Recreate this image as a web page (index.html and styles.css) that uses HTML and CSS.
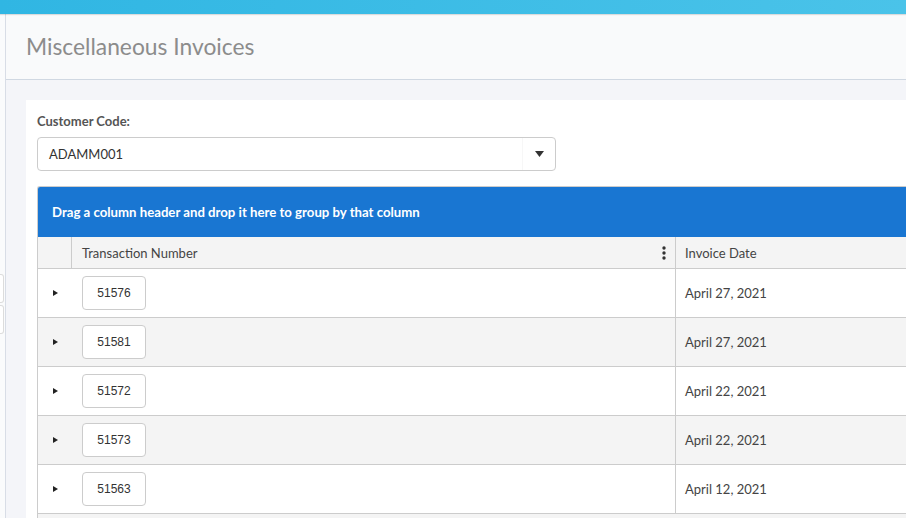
FILE: index.html
```html
<!doctype html>
<html lang="en">
  <head>
    <meta charset="UTF-8" />
    <meta name="viewport" content="width=device-width, initial-scale=1.0" />
    <title>Miscellaneous Invoices</title>
    <link rel="stylesheet" href="styles.css">
  </head>
  <body>
    <div class="topbar"></div>
    <div class="layout">
      <div class="sidebar">
        <div class="side-tab"></div>
        <div class="side-tab"></div>
      </div>
      <div class="main">
        <div class="page-header">
          <h1>Miscellaneous Invoices</h1>
        </div>
        <div class="content">
          <div class="card">
            <label class="field-label">Customer Code:</label>
            <div class="select">
              <span class="select-value">ADAMM001</span>
              <span class="select-arrow">
                <svg width="9" height="6" viewBox="0 0 9 6"><path d="M0 0h9L4.5 6z" fill="#333"/></svg>
              </span>
            </div>

            <div class="grid">
              <div class="group-panel">Drag a column header and drop it here to group by that column</div>
              <div class="grid-row grid-head">
                <div class="cell expand-col"></div>
                <div class="cell num-col">
                  <span>Transaction Number</span>
                  <svg class="kebab" width="4" height="14" viewBox="0 0 4 14">
                    <circle cx="2" cy="2" r="1.7" fill="#333"/>
                    <circle cx="2" cy="7" r="1.7" fill="#333"/>
                    <circle cx="2" cy="12" r="1.7" fill="#333"/>
                  </svg>
                </div>
                <div class="cell date-col">Invoice Date</div>
              </div>
              <div id="rows"></div>
              <div class="grid-row alt"></div>
            </div>
          </div>
        </div>
      </div>
    </div>

    <script>
      const invoices = [
        ['51576', 'April 27, 2021'],
        ['51581', 'April 27, 2021'],
        ['51572', 'April 22, 2021'],
        ['51573', 'April 22, 2021'],
        ['51563', 'April 12, 2021'],
      ]

      const rows = document.getElementById('rows')
      invoices.forEach((inv, i) => {
        const row = document.createElement('div')
        row.className = 'grid-row' + (i % 2 ? ' alt' : '')
        row.innerHTML = `
          <div class="cell expand-col"><span class="caret"></span></div>
          <div class="cell num-col"><button class="num-btn">${inv[0]}</button></div>
          <div class="cell date-col">${inv[1]}</div>`
        rows.appendChild(row)
      })
    </script>
  </body>
</html>
```

FILE: styles.css
```css
html, body {
  height: 100%;
}
body {
  margin: 0;
  font-family: Lato, "Open Sans", sans-serif;
  background: #f4f5f9;
  overflow: hidden;
}
.topbar {
  height: 14px;
  background: linear-gradient(to right, #30b6e3, #4ac3e9);
  box-shadow: 0 1px 1px rgba(0, 0, 0, 0.12);
  position: relative;
}
.layout {
  display: flex;
  height: calc(100% - 14px);
}
.sidebar {
  width: 6px;
  background: #fafbfc;
  border-right: 1px solid #d8dde6;
  padding-top: 260px;
  box-sizing: border-box;
  flex-shrink: 0;
}
.side-tab {
  height: 27px;
  width: 3px;
  border: 1px solid #dcdcdc;
  border-left: none;
  border-radius: 0 3px 3px 0;
  background: white;
  margin-bottom: 2px;
}
.main {
  flex: 1;
  min-width: 0;
}
.page-header {
  height: 65px;
  background: #f9fafb;
  border-bottom: 1px solid #d0d8e2;
  display: flex;
  align-items: center;
  padding-left: 20px;
}
.page-header h1 {
  margin: 0;
  font-weight: normal;
  font-size: 22.8px;
  color: #8c8c8c;
  padding-bottom: 1px;
}
.content {
  padding: 20px 0 0 20px;
}
.card {
  background: white;
  padding: 11px 0 0 11px;
  height: 600px;
}
.field-label {
  display: block;
  font-size: 13px;
  font-weight: bold;
  color: #555;
  margin: 2px 0 8px;
}
.select {
  width: 519px;
  height: 34px;
  box-sizing: border-box;
  border: 1px solid #ccc;
  border-radius: 4px;
  display: flex;
  align-items: center;
  font-size: 13px;
  color: #333;
}
.select-value {
  flex: 1;
  padding-left: 11px;
}
.select-arrow {
  width: 32px;
  height: 100%;
  display: flex;
  align-items: center;
  justify-content: center;
  border-left: 1px solid #f7f7f7;
}
.grid {
  margin-top: 15px;
  border-left: 1px solid #ccc;
  border-top: 1px solid #ccc;
  border-radius: 3px 0 0 0;
  overflow: hidden;
}
.group-panel {
  background: #1976d2;
  color: white;
  font-size: 13.2px;
  font-weight: bold;
  height: 50px;
  display: flex;
  align-items: center;
  padding-left: 14px;
}
.grid-row {
  display: flex;
  height: 49px;
  box-sizing: border-box;
  border-bottom: 1px solid #ccc;
  background: white;
  font-size: 13px;
  color: #444;
}
.grid-row.alt {
  background: #f4f4f4;
}
.grid-head {
  height: 32px;
  background: #f4f4f4;
}
.cell {
  display: flex;
  align-items: center;
  box-sizing: border-box;
}
.expand-col {
  width: 33px;
  justify-content: center;
}
.num-col {
  width: 604px;
  border-left: 1px solid #ccc;
  padding-left: 10px;
}
.grid-row:not(.grid-head) .expand-col + .num-col {
  border-left: none;
  padding-left: 11px;
}
.grid-head .num-col {
  justify-content: space-between;
  padding-right: 9px;
}
.date-col {
  flex: 1;
  border-left: 1px solid #ccc;
  padding-left: 9px;
}
.caret {
  width: 0;
  height: 0;
  border-top: 3.5px solid transparent;
  border-bottom: 3.5px solid transparent;
  border-left: 5px solid #222;
  margin-left: 1px;
}
.num-btn {
  width: 64px;
  height: 34px;
  background: white;
  border: 1px solid #ccc;
  border-radius: 4px;
  font-family: "Liberation Sans", sans-serif;
  font-size: 12px;
  color: #333;
  padding: 0;
}
```
